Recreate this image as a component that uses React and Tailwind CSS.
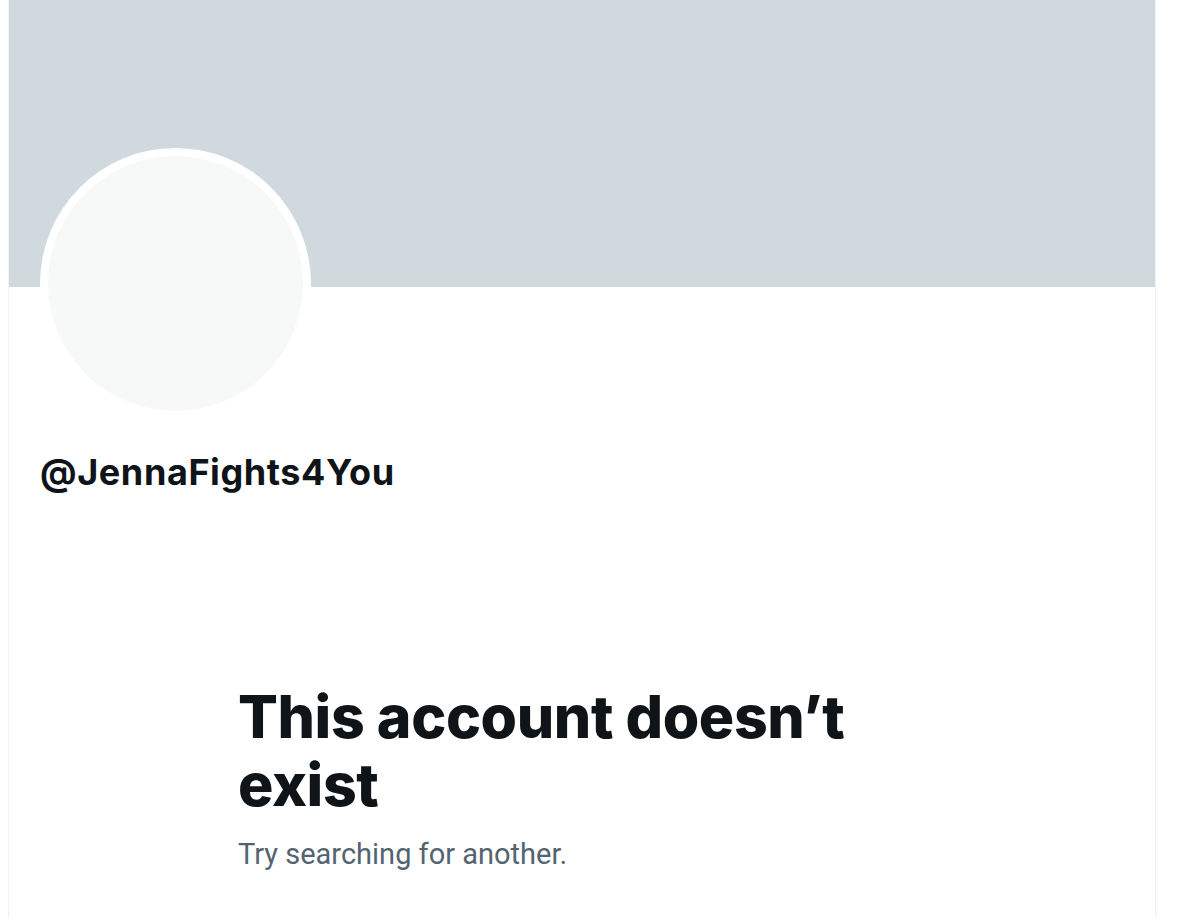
export default function App() {
  return (
    <div className="min-h-[918px] w-[1192px] bg-white" style={{ fontFamily: "Inter, 'Noto Sans', sans-serif" }}>
      <div className="ml-[8px] w-[1148px] min-h-[918px] border-l border-r border-[#eff3f4]">
        <div className="h-[287px] bg-[#cfd9de]" />
        <div className="ml-[31px] mt-[-139px] h-[271px] w-[271px] rounded-full bg-white p-[8px]">
          <div className="h-full w-full rounded-full bg-[#f7f9f9]" />
        </div>
        <div className="ml-[31px] mt-[33px] text-[36px] font-bold leading-[40px] text-[#0f1419] tracking-[0.6px]">
          @JennaFights4You
        </div>
        <div className="ml-[229px] mt-[191px] w-[640px]">
          <h1 className="text-[59px] font-extrabold leading-[68px] text-[#0f1419] tracking-[-0.4px]">
            This account doesn’t exist
          </h1>
          <p className="mt-[16px] text-[29px] leading-[38px] text-[#536471]" style={{ fontFamily: "Roboto, 'Noto Sans', sans-serif" }}>
            Try searching for another.
          </p>
        </div>
      </div>
    </div>
  );
}
